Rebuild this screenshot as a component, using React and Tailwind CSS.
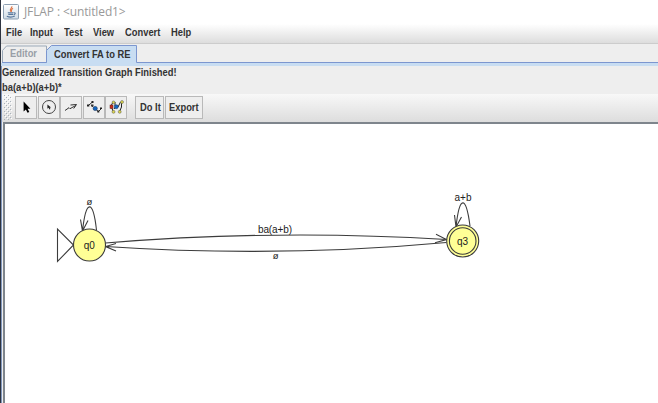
import React from "react";

function JavaIcon() {
  return (
    <svg width="16" height="16" viewBox="0 0 16 16" className="shrink-0">
      <defs>
        <linearGradient id="cup" x1="0" y1="0" x2="0" y2="1">
          <stop offset="0" stopColor="#ffffff" />
          <stop offset="1" stopColor="#cfdbe6" />
        </linearGradient>
      </defs>
      <rect x="0.5" y="0.5" width="15" height="14.5" rx="1" fill="url(#cup)" stroke="#8da0b3" />
      <path d="M8.8 2.2C9.6 4 5.8 4.7 7.8 7.8M10 4.2C7.8 5.4 8.8 6.2 8.4 7.8" fill="none" stroke="#df7545" strokeWidth="1.1" />
      <path d="M4.8 8.7h5.6M5.3 10.4h4.8M3.8 12.3c2.500 1 6 .8 8-.2M10.8 8.8c2.2-.3 1.5 1.8-.2 2" fill="none" stroke="#58779b" strokeWidth="1.1" />
    </svg>
  );
}

function Label({ children }) {
  return <span className="inline-block origin-left scale-x-[0.85] whitespace-nowrap">{children}</span>;
}

function ToolButton({ children }) {
  return (
    <div className="flex h-[23px] w-[22px] items-center justify-center border border-[#b9b9b9] bg-[#eeeeee]">
      <svg width="20" height="20" viewBox="0 0 20 20" className="shrink-0">{children}</svg>
    </div>
  );
}

function Toolbar() {
  return (
    <div className="flex h-[28px] shrink-0 items-center bg-linear-to-b from-[#f8f8f8] to-[#dddddd] pb-[2px] pl-[2px]">
      <svg width="9" height="25" className="mr-[2px] shrink-0">
        <defs>
          <pattern id="grip" width="4" height="4" patternUnits="userSpaceOnUse">
            <path d="M0 0h1v1H0zM2 2h1v1H2z" fill="#a9b2ba" />
            <path d="M1 1h1v1H1zM3 3h1v1H3z" fill="#ffffff" />
          </pattern>
        </defs>
        <rect width="8" height="25" fill="url(#grip)" />
      </svg>
      <div className="flex gap-[0.5px]">
        <ToolButton>
          <path d="M7.600 4.500v10l2.300-2.100 1.600 3.300 1.800-.8-1.700-3.100h2.800z" fill="#000" />
        </ToolButton>
        <ToolButton>
          <circle cx="10" cy="10" r="6.500" fill="none" stroke="#444" />
          <path d="M8.400 7.500v4.200l1.200-.9.800 1.600 1-.5-.7-1.500h1.400z" fill="#222" />
        </ToolButton>
        <ToolButton>
          <path d="M4 13.500l4-2.800 1 1 6-3.300M9.500 8l6-.5-2.800 4" fill="none" stroke="#333" strokeWidth="1" />
        </ToolButton>
        <ToolButton>
          <path d="M4.300 8.500L8.500 5M7 8l2 2M12 12.500l2.500 2 3-3" fill="none" stroke="#333" strokeWidth="1" />
          <path d="M3 7.500h2.300v2H3zM7.500 4h2v2h-2zM13.300 13.500h2v2h-2zM16 10.500h2v1.500h-2z" fill="#222" />
          <path d="M7 7.500h2.500v2H7z" fill="#333" />
          <circle cx="11.200" cy="11.500" r="2.100" fill="#1266c2" stroke="#17345c" strokeWidth=".6" />
        </ToolButton>
        <ToolButton>
          <path d="M7 5L5 9l2 5M9 5v4M12 10l2.500-5M15.500 5v5l-1.700 4M8 12l3-4" fill="none" stroke="#222" strokeWidth="1" />
          <circle cx="7.500" cy="5.300" r="1.400" fill="#ddd64a" stroke="#555" strokeWidth=".5" />
          <circle cx="16" cy="5" r="1.500" fill="#ddd64a" stroke="#555" strokeWidth=".5" />
          <circle cx="7.500" cy="14.800" r="1.500" fill="#ddd64a" stroke="#555" strokeWidth=".5" />
          <circle cx="13.700" cy="14.800" r="1.500" fill="#ddd64a" stroke="#555" strokeWidth=".5" />
          <rect x="4" y="8" width="3" height="3.500" fill="#c92c1d" stroke="#5c2019" strokeWidth=".5" />
          <circle cx="10.300" cy="9.700" r="2" fill="#1266c2" stroke="#17345c" strokeWidth=".5" />
        </ToolButton>
      </div>
      <div className="ml-[8px] h-[23px] w-[29px] border border-[#b9b9b9] bg-[#eeeeee] pl-1 leading-[21px]"><Label>Do It</Label></div>
      <div className="ml-px h-[23px] w-[38px] border border-[#b9b9b9] bg-[#eeeeee] pl-[3px] leading-[21px]"><Label>Export</Label></div>
    </div>
  );
}

function Tabs() {
  return (
    <div className="flex h-[19px] shrink-0 items-end pl-px">
      <div className="grid h-[19px] w-[136px]">
        <svg width="136" height="19" viewBox="2 44 136 19" className="col-start-1 row-start-1 block">
          <path d="M2.500 63V50.500l4-4.500h40v17z" fill="#eeeeee" stroke="#9ba9b8" />
          <path d="M46.500 63V50.500l5-5h85V63z" fill="#c8ddf2" />
          <path d="M2 62.500h44.500V50.500l5-5h85v17h2" fill="none" stroke="#7c96cf" />
        </svg>
        <div className="col-start-1 row-start-1 flex pl-2 leading-[18px]">
          <div className="w-11 text-[#999fa7]"><Label>Editor</Label></div>
          <div className="w-[84px] pt-px"><Label>Convert FA to RE</Label></div>
        </div>
      </div>
      <div className="h-px flex-1 bg-[#7c96cf]" />
    </div>
  );
}

function Automaton() {
  return (
    <svg width="653" height="279" viewBox="5 124 653 279" className="block">
      <g fill="none" stroke="#3c3c3c" strokeWidth="1.1">
        <path d="M57.5 229v32.5L73.5 245z" />
        <path d="M82.5 231C86 199 93 199 96.5 230M80.5 219.5l2 11.5 5.5-10.5" />
        <path d="M456 227C459.500 195 466 195 470 226M454.500 215l1.500 12 5.500-10" />
        <path d="M105.500 243Q277 229 446.500 239.500M436 234.300l10.500 5.200-11.500 3.200" />
        <path d="M446.500 242.500Q277 258 105.500 246.500M116 243.500l-10.500 3 10.500 4.500" />
      </g>
      <g fill="#ffff96" stroke="#3c3c3c" strokeWidth="1.1">
        <circle cx="89.500" cy="245" r="16" />
        <circle cx="462.700" cy="241" r="16" />
        <circle cx="462.700" cy="241" r="13.300" />
      </g>
      <g fill="#222" fontSize="10" fontWeight="400" fontFamily="'Liberation Sans', Arial, sans-serif" textAnchor="middle">
        <text x="89.300" y="249" textLength="11">q0</text>
        <text x="462.500" y="245" textLength="11">q3</text>
        <text x="89.300" y="205" fontSize="9.500">ø</text>
        <text x="463" y="201" textLength="17">a+b</text>
        <text x="275" y="233" textLength="34">ba(a+b)</text>
        <text x="275.700" y="259" fontSize="9.500">ø</text>
      </g>
    </svg>
  );
}

export default function App() {
  return (
    <div className="flex h-[403px] w-[658px] overflow-hidden bg-[#eeeeee] font-['Liberation_Sans',Arial,sans-serif] text-[11px] font-bold text-[#333333]">
      <div className="w-px shrink-0 bg-[#2e3440]" />
      <div className="flex min-w-0 flex-1 flex-col">
        <header className="flex h-6 shrink-0 items-center gap-[5px] bg-white pl-[2px] font-['Open_Sans','Noto_Sans',sans-serif] text-[12px] font-normal text-[#999999]">
          <JavaIcon />
          <span className="tracking-[-0.12px] whitespace-nowrap">JFLAP : &lt;untitled1&gt;</span>
        </header>
        <nav className="flex h-5 shrink-0 items-center border-b border-[#cccccc] bg-linear-to-b from-white to-[#dddddd] pb-[2px] pl-[5px]">
          <div className="w-6"><Label>File</Label></div>
          <div className="w-[34px]"><Label>Input</Label></div>
          <div className="w-[29px]"><Label>Test</Label></div>
          <div className="w-8"><Label>View</Label></div>
          <div className="w-[46px]"><Label>Convert</Label></div>
          <Label>Help</Label>
        </nav>
        <Tabs />
        <div className="h-[3px] shrink-0 bg-[#c8ddf2]" />
        <div className="flex min-h-0 flex-1 flex-col border-l border-[#8197bd]">
          <div className="h-[14px] shrink-0 leading-[13px]"><Label>Generalized Transition Graph Finished!</Label></div>
          <div className="h-[14px] shrink-0 leading-[14px]"><Label>ba(a+b)(a+b)*</Label></div>
          <Toolbar />
          <main className="ml-px min-h-0 flex-1 overflow-hidden border-t-2 border-l-2 border-[#7e858c] bg-white">
            <Automaton />
          </main>
        </div>
      </div>
    </div>
  );
}
